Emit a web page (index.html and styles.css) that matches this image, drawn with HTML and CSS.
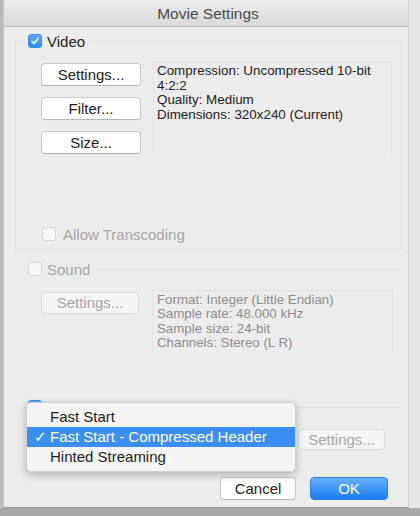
FILE: index.html
```html
<!DOCTYPE html>
<html>
<head>
<meta charset="utf-8">
<link rel="stylesheet" href="styles.css">
</head>
<body>
<div class="window">
  <div class="titlebar">Movie Settings</div>
  <div class="content">
    <fieldset class="group video">
      <legend><span class="cb checked"><svg viewBox="0 0 14 14"><path d="M3.5 7.3 L6 10 L10.6 3.8" fill="none" stroke="#fff" stroke-width="1.8" stroke-linecap="round" stroke-linejoin="round"/></svg></span><span>Video</span></legend>
      <div class="row">
        <div class="btns">
          <div class="btn">Settings...</div>
          <div class="btn">Filter...</div>
          <div class="btn">Size...</div>
        </div>
        <div class="info">
          <div>Compression: Uncompressed 10-bit<br>4:2:2</div>
          <div>Quality: Medium</div>
          <div>Dimensions: 320x240 (Current)</div>
        </div>
      </div>
      <div class="cb-row disabled"><span class="cb"></span><span>Allow Transcoding</span></div>
    </fieldset>

    <fieldset class="group sound disabled">
      <legend><span class="cb"></span><span>Sound</span></legend>
      <div class="row">
        <div class="btn btn-sm btn-disabled">Settings...</div>
        <div class="info info-sound">
          <div>Format: Integer (Little Endian)</div>
          <div>Sample rate: 48.000 kHz</div>
          <div>Sample size: 24-bit</div>
          <div>Channels: Stereo (L R)</div>
        </div>
      </div>
    </fieldset>

    <fieldset class="group stream">
      <legend><span class="cb checked"><svg viewBox="0 0 14 14"><path d="M3.5 7.3 L6 10 L10.6 3.8" fill="none" stroke="#fff" stroke-width="1.8" stroke-linecap="round" stroke-linejoin="round"/></svg></span><span class="legend-hidden">Prepare for Internet Streaming:</span></legend>
      <div class="row stream-row">
        <div class="popup-btn"></div>
        <div class="btn btn-sm btn-disabled btn-stream">Settings...</div>
      </div>
    </fieldset>

    <div class="footer">
      <div class="btn btn-foot">Cancel</div>
      <div class="btn btn-foot btn-ok">OK</div>
    </div>
  </div>

  <div class="menu">
    <div class="item">Fast Start</div>
    <div class="item selected"><span class="check">✓</span>Fast Start - Compressed Header</div>
    <div class="item">Hinted Streaming</div>
  </div>
</div>
</body>
</html>
```

FILE: styles.css
```css
* { box-sizing: border-box; }

html, body {
  margin: 0;
  padding: 0;
}

body {
  width: 420px;
  height: 516px;
  overflow: hidden;
  font-family: "Liberation Sans", Arial, sans-serif;
  background:
    linear-gradient(#e6e6e6, #e6e6e6) right top / 11px 508px no-repeat,
    linear-gradient(#b9b9b9, #b9b9b9) left top / 3px 508px no-repeat,
    #a9a9a9;
}

.window {
  position: relative;
  margin-left: 3px;
  width: 406px;
  height: 508px;
  background: #ececec;
  border-left: 1px solid #c9c9c9;
  border-right: 1px solid #cfcfcf;
  border-bottom: 1px solid #9c9c9c;
  display: flex;
  flex-direction: column;
}

.titlebar {
  height: 27px;
  flex: none;
  background: linear-gradient(#ededed, #d9d9d9);
  border-bottom: 1px solid #bdbdbd;
  text-align: center;
  font-size: 15.5px;
  line-height: 27px;
  color: #4b4b4b;
  padding-left: 4px;
}

.content {
  padding: 6px 6px 0 11px;
  display: flex;
  flex-direction: column;
}

fieldset.group {
  margin: 0;
  min-width: 0;
  border: 1px solid #dedede;
  padding: 14px 9px 8px 25px;
}

legend {
  display: flex;
  align-items: center;
  gap: 5px;
  height: 16px;
  margin-left: -15px;
  padding: 0 4px 0 2px;
  font-size: 15px;
  color: #222;
}

.cb {
  width: 14px;
  height: 14px;
  border-radius: 3px;
  background: #fbfbfb;
  border: 1px solid #cdcdcd;
  display: inline-block;
  flex: none;
}

.cb.checked {
  background: linear-gradient(#5aa8fb, #2f8af6);
  border: 1px solid #3a8ff2;
}

.cb svg {
  display: block;
  width: 12px;
  height: 12px;
}

.row {
  display: flex;
  align-items: flex-start;
}

.btns {
  display: flex;
  flex-direction: column;
  gap: 11px;
}

.btn {
  width: 100px;
  height: 23px;
  background: #fff;
  border: 1px solid #c8c8c8;
  border-bottom-color: #b5b5b5;
  border-radius: 4px;
  box-shadow: 0 0.5px 0 rgba(0,0,0,0.05);
  font-size: 15px;
  line-height: 21px;
  text-align: center;
  color: #222;
}

.info {
  flex: 1;
  margin-left: 12px;
  margin-top: -1px;
  height: 92px;
  border: 1px solid #e2e2e2;
  border-bottom: none;
  padding: 1px 3px;
  font-size: 13.4px;
  line-height: 14.5px;
  color: #222;
}

.cb-row {
  display: flex;
  align-items: center;
  gap: 7px;
  margin-top: 73px;
  margin-left: 1px;
  font-size: 15px;
  height: 14px;
}

.disabled, .disabled legend {
  color: #a6a6a6;
}

.cb-row .cb, .sound .cb {
  background: #f6f6f6;
  border-color: #d6d6d6;
}

fieldset.sound {
  margin: 11px 2px 0 9px;
  border-width: 1px 0 0 0;
  padding: 15px 0 0 17px;
}

.btn-sm {
  width: 98px;
  height: 22px;
  line-height: 20px;
}

.btn-disabled {
  background: #f5f5f5;
  border-color: #d9d9d9;
  color: #a6a6a6;
  box-shadow: none;
}

.info-sound {
  margin-left: 13px;
  margin-top: -2px;
  height: 62px;
  padding: 2px 4px;
  font-size: 13.3px;
  line-height: 14.4px;
  color: #8d8d8d;
  border-color: #e2e2e2;
  margin-right: 7px;
}

fieldset.stream {
  margin: 47px 2px 0 9px;
  border-width: 1px 0 0 0;
  padding: 14px 0 0 17px;
}

.legend-hidden {
  color: #333;
}

.stream-row {
  gap: 8px;
}

.popup-btn {
  width: 249px;
  height: 21px;
  background: #fff;
  border: 1px solid #c8c8c8;
  border-radius: 4px;
}

.btn-stream {
  width: 87px;
  height: 21px;
  line-height: 19px;
}

.footer {
  display: flex;
  justify-content: flex-end;
  gap: 14px;
  margin-top: 27px;
  padding-right: 14px;
}

.btn-foot {
  height: 23px;
  line-height: 21px;
}

.btn-foot:first-child {
  width: 76px;
}

.btn-ok {
  width: 78px;
  background: linear-gradient(#67b1fb, #1a7cf3);
  border: 1px solid #2b7fe8;
  color: #fff;
}

.menu {
  position: absolute;
  left: 22px;
  top: 402px;
  width: 270px;
  height: 70px;
  padding: 4px 0;
  background: #f4f4f4;
  border: 1px solid #cfcfcf;
  border-radius: 5px;
  box-shadow: 0 3px 9px rgba(0,0,0,0.25);
  font-size: 15px;
  color: #1e1e1e;
}

.item {
  position: relative;
  height: 20px;
  line-height: 20px;
  padding-left: 23px;
}

.item.selected {
  background: #3b8ff4;
  color: #fff;
}

.check {
  position: absolute;
  left: 7px;
  top: 0;
  font-family: "DejaVu Sans", sans-serif;
  font-size: 15px;
  font-weight: bold;
}
```
